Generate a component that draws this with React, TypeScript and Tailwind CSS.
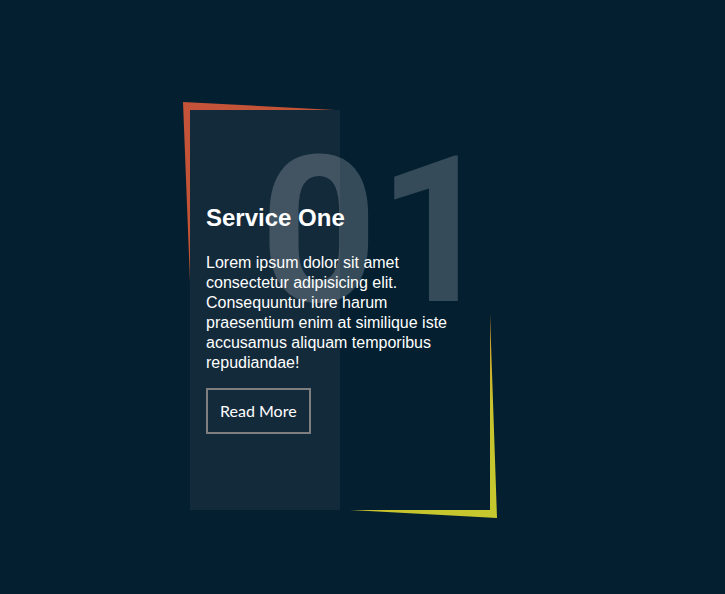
import React from "react";

export default function App() {
  return (
    <div className="min-h-[594px] w-full bg-[#031f30] pl-[190px] pt-[110px]" style={{ fontFamily: '"Liberation Sans", Arial, sans-serif' }}>
      <div className="relative h-[400px] w-[300px]">
        <svg className="absolute left-[-7px] top-[-8px]" width="314" height="416" viewBox="0 0 314 416">
          <defs>
            <linearGradient id="g" gradientUnits="userSpaceOnUse" x1="0" y1="0" x2="314" y2="416">
              <stop offset="0" stopColor="#c4533a" />
              <stop offset="0.36" stopColor="#c4552f" />
              <stop offset="0.68" stopColor="#d2962a" />
              <stop offset="0.82" stopColor="#c8c22d" />
              <stop offset="1" stopColor="#c5c92e" />
            </linearGradient>
          </defs>
          <polygon points="0,0 152,8 7,8 7,180" fill="url(#g)" />
          <polygon points="314,416 307,212 307,408 167,408" fill="url(#g)" />
        </svg>
        <div className="absolute left-0 top-0 h-[400px] w-[150px] bg-[#132a3b]" />
        <div
          className="absolute left-[70px] top-[19px] select-none text-[205px] font-bold leading-[205px] text-white/20"
          style={{ fontFamily: 'Roboto, Arial, sans-serif' }}
        >
          01
        </div>
        <div className="relative px-4 pt-[96px]">
          <h2 className="mb-[23px] text-[24px] font-bold leading-[24px] text-white">Service One</h2>
          <p className="w-[250px] text-[16px] leading-[20px] text-white">
            Lorem ipsum dolor sit amet consectetur adipisicing elit. Consequuntur iure harum praesentium enim at similique iste accusamus aliquam temporibus repudiandae!
          </p>
          <button className="mt-[15px] border-2 border-[#7f7f7f] bg-transparent px-3 py-3 text-[16px] leading-[18px] text-white" style={{ fontFamily: 'Lato, "Noto Sans", sans-serif' }}>
            Read More
          </button>
        </div>
      </div>
    </div>
  );
}
